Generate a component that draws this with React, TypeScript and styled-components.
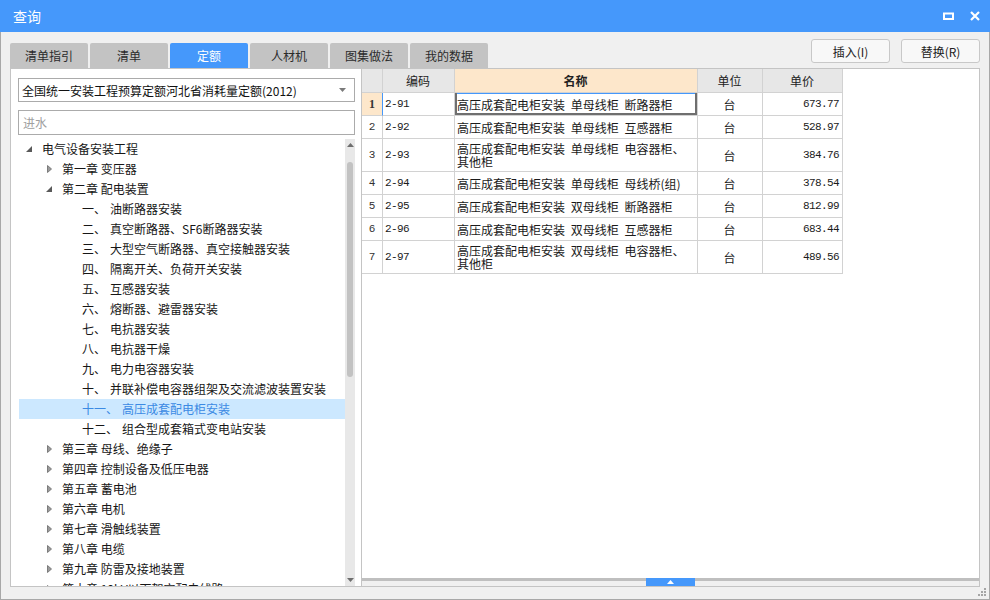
import styled, { createGlobalStyle } from "styled-components";

//types
type TreeNode = {
  level: number;
  label: string;
  num?: string;
  state?: "open" | "closed";
  selected?: boolean;
};
type Quota = {
  no: number;
  code: string;
  name: string;
  unit: string;
  price: string;
};

//data
const tabs = ["清单指引", "清单", "定额", "人材机", "图集做法", "我的数据"];

const tree: TreeNode[] = [
  { level: 0, label: "电气设备安装工程", state: "open" },
  { level: 1, label: "第一章 变压器", state: "closed" },
  { level: 1, label: "第二章 配电装置", state: "open" },
  { level: 2, num: "一、", label: "油断路器安装" },
  { level: 2, num: "二、", label: "真空断路器、SF6断路器安装" },
  { level: 2, num: "三、", label: "大型空气断路器、真空接触器安装" },
  { level: 2, num: "四、", label: "隔离开关、负荷开关安装" },
  { level: 2, num: "五、", label: "互感器安装" },
  { level: 2, num: "六、", label: "熔断器、避雷器安装" },
  { level: 2, num: "七、", label: "电抗器安装" },
  { level: 2, num: "八、", label: "电抗器干燥" },
  { level: 2, num: "九、", label: "电力电容器安装" },
  { level: 2, num: "十、", label: "并联补偿电容器组架及交流滤波装置安装" },
  { level: 2, num: "十一、", label: "高压成套配电柜安装", selected: true },
  { level: 2, num: "十二、", label: "组合型成套箱式变电站安装" },
  { level: 1, label: "第三章 母线、绝缘子", state: "closed" },
  { level: 1, label: "第四章 控制设备及低压电器", state: "closed" },
  { level: 1, label: "第五章 蓄电池", state: "closed" },
  { level: 1, label: "第六章 电机", state: "closed" },
  { level: 1, label: "第七章 滑触线装置", state: "closed" },
  { level: 1, label: "第八章 电缆", state: "closed" },
  { level: 1, label: "第九章 防雷及接地装置", state: "closed" },
  { level: 1, label: "第十章 10kV以下架空配电线路", state: "closed" },
];

const quotas: Quota[] = [
  { no: 1, code: "2-91", name: "高压成套配电柜安装 单母线柜 断路器柜", unit: "台", price: "673.77" },
  { no: 2, code: "2-92", name: "高压成套配电柜安装 单母线柜 互感器柜", unit: "台", price: "528.97" },
  { no: 3, code: "2-93", name: "高压成套配电柜安装 单母线柜 电容器柜、\n其他柜", unit: "台", price: "384.76" },
  { no: 4, code: "2-94", name: "高压成套配电柜安装 单母线柜 母线桥(组)", unit: "台", price: "378.54" },
  { no: 5, code: "2-95", name: "高压成套配电柜安装 双母线柜 断路器柜", unit: "台", price: "812.99" },
  { no: 6, code: "2-96", name: "高压成套配电柜安装 双母线柜 互感器柜", unit: "台", price: "683.44" },
  { no: 7, code: "2-97", name: "高压成套配电柜安装 双母线柜 电容器柜、\n其他柜", unit: "台", price: "489.56" },
];

const BLUE = "#4598fb";
const GRID = "#d2d2d2";
const COLS = "21px 72px 243px 65px 80px";

//styles
const GlobalStyle = createGlobalStyle`
  html, body { margin: 0; padding: 0; background: #f0f0f0; }
  body {
    font-family: "Noto Sans CJK SC", "Noto Sans", sans-serif;
    font-size: 12px;
    color: #1e1e1e;
  }
  * { box-sizing: border-box; }
`;

const Window = styled.div`
  width: 990px;
  height: 600px;
  display: flex;
  flex-direction: column;
  background: #f0f0f0;
  border: 1px solid #a8a8a8;
  border-top: none;
`;
const TitleBar = styled.div`
  height: 32px;
  margin: 0 -1px;
  padding: 0 10px 0 13px;
  display: flex;
  align-items: center;
  justify-content: space-between;
  background: ${BLUE};
  color: #fff;
  font-size: 14px;
`;
const Controls = styled.div`
  display: flex;
  align-items: center;
  gap: 16px;
  margin-top: -1px;
`;
const Toolbar = styled.div`
  height: 36px;
  padding: 0 9px;
  display: flex;
  align-items: flex-end;
  justify-content: space-between;
`;
const Tabs = styled.div`
  display: flex;
  gap: 2px;
`;
const Tab = styled.div<{ $active?: boolean }>`
  width: 78px;
  height: 25px;
  display: flex;
  align-items: center;
  justify-content: center;
  border-radius: 2px 2px 0 0;
  background: ${(p) => (p.$active ? BLUE : "#c3c3c3")};
  color: ${(p) => (p.$active ? "#fff" : "#2b2b2b")};
  font-size: 12px;
`;
const Buttons = styled.div`
  display: flex;
  gap: 11px;
  margin-bottom: 5px;
`;
const Button = styled.button`
  width: 79px;
  height: 24px;
  padding: 0;
  border: 1px solid #c8c8c8;
  border-radius: 3px;
  background: #f8f8f8;
  color: #222;
  font-family: inherit;
  font-size: 12px;
`;
const Main = styled.div`
  flex: 1;
  margin: 0 9px;
  display: flex;
  border: 1px solid #c4c4c4;
  min-height: 0;
`;
const LeftPanel = styled.div`
  width: 350px;
  padding: 9px 6px 0 7px;
  display: flex;
  flex-direction: column;
  background: #fff;
`;
const Select = styled.div`
  height: 24px;
  padding: 0 8px 0 3px;
  display: flex;
  align-items: center;
  justify-content: space-between;
  border: 1px solid #ababab;
  font-size: 12px;
  color: #111;
`;
const Search = styled.div`
  height: 25px;
  margin-top: 8px;
  padding: 0 4px;
  display: flex;
  align-items: center;
  border: 1px solid #ababab;
  color: #a0a0a0;
  font-size: 12px;
`;
const TreeArea = styled.div`
  flex: 1;
  margin: 4px 0 0 1px;
  display: flex;
  min-height: 0;
`;
const TreeList = styled.div`
  flex: 1;
  overflow: hidden;
`;
const TreeRow = styled.div<{ $level: number; $selected?: boolean }>`
  height: 20px;
  padding-left: ${(p) => 6 + p.$level * 20}px;
  display: flex;
  align-items: center;
  white-space: nowrap;
  line-height: 20px;
  font-size: 12px;
  background: ${(p) => (p.$selected ? "#cce8ff" : "transparent")};
  color: ${(p) => (p.$selected ? "#3b8ae4" : "#161616")};
`;
const Toggle = styled.span`
  width: 17px;
  height: 20px;
  flex: none;
  display: flex;
  align-items: center;
`;
const Num = styled.span`
  margin-right: 4px;
`;
const VScroll = styled.div`
  width: 10px;
  display: flex;
  flex-direction: column;
  align-items: center;
  background: #e8e8e8;
`;
const ScrollArrow = styled.div`
  height: 12px;
  display: flex;
  align-items: center;
  justify-content: center;
`;
const Thumb = styled.div`
  width: 6px;
  height: 215px;
  margin-top: 11px;
  border-radius: 3px;
  background: #c2c2c2;
`;
const Spacer = styled.div`
  flex: 1;
`;
const RightPanel = styled.div`
  flex: 1;
  display: flex;
  flex-direction: column;
  border-left: 1px solid #c4c4c4;
`;
const TableArea = styled.div`
  flex: 1;
  background: #fff;
`;
const Row = styled.div<{ $h: number }>`
  display: grid;
  grid-template-columns: ${COLS};
  width: 481px;
  height: ${(p) => p.$h}px;
`;
const Cell = styled.div<{
  $align?: "left" | "center" | "right";
  $bg?: string;
  $bold?: boolean;
  $mono?: boolean;
}>`
  display: flex;
  align-items: center;
  justify-content: ${(p) =>
    p.$align === "right" ? "flex-end" : p.$align === "center" ? "center" : "flex-start"};
  padding: 0 3px 0 2px;
  border-right: 1px solid ${GRID};
  border-bottom: 1px solid ${GRID};
  background: ${(p) => p.$bg || "#fff"};
  font-weight: ${(p) => (p.$bold ? 700 : 400)};
  font-family: ${(p) =>
    p.$mono ? `"Liberation Mono", monospace` : `"Noto Sans CJK SC", sans-serif`};
  font-size: ${(p) => (p.$mono ? "11px" : "12px")};
  letter-spacing: ${(p) => (p.$mono ? "-0.6px" : "0")};
  color: #1a1a1a;
  overflow: hidden;
`;
const HeadCell = styled(Cell)`
  background: ${(p) => p.$bg || "#e7e7e7"};
  color: #222;
`;
const RowNo = styled(Cell)<{ $current?: boolean }>`
  justify-content: center;
  padding: 0;
  color: #333;
  background: ${(p) => (p.$current ? "#fde7cb" : "#fff")};
  border-right-color: ${(p) => (p.$current ? BLUE : GRID)};
  font-family: ${(p) =>
    p.$current ? `"Liberation Serif", serif` : `"Liberation Mono", monospace`};
  font-size: ${(p) => (p.$current ? "12px" : "11px")};
`;
const NameCell = styled(Cell)<{ $focus?: boolean }>`
  white-space: pre-wrap;
  word-spacing: 3px;
  line-height: 13px;
  box-shadow: ${(p) =>
    p.$focus
      ? `inset 2px 0 0 #6f6f6f, inset -2px 0 0 #6f6f6f, inset 0 -2px 0 #6f6f6f, inset 0 1px 0 ${BLUE}`
      : "none"};
`;
const HScroll = styled.div`
  height: 8px;
  padding-left: 284px;
  display: flex;
  background: linear-gradient(#bfbfbf 0 3px, #f0f0f0 3px);
`;
const HThumb = styled.div`
  width: 49px;
  display: flex;
  align-items: center;
  justify-content: center;
  background: ${BLUE};
`;
const Footer = styled.div`
  height: 12px;
  padding: 1px 2px 0 0;
  display: flex;
  justify-content: flex-end;
`;

//icons
function Maximize() {
  return (
    <svg width="11" height="8" viewBox="0 0 11 8">
      <rect x="1" y="1.5" width="9" height="5.5" fill="none" stroke="#fff" strokeWidth="2" />
    </svg>
  );
}
function Close() {
  return (
    <svg width="10" height="10" viewBox="0 0 10 10">
      <path d="M1 1 L9 9 M9 1 L1 9" stroke="#fff" strokeWidth="2.2" />
    </svg>
  );
}
function Caret({ dir, color = "#6e6e6e" }: { dir: "up" | "down"; color?: string }) {
  return (
    <svg width="7" height="4" viewBox="0 0 7 4">
      <polygon points={dir === "up" ? "3.5,0 7,4 0,4" : "0,0 7,0 3.5,4"} fill={color} />
    </svg>
  );
}
function TreeToggle({ state }: { state?: "open" | "closed" }) {
  if (state === "open")
    return (
      <svg width="6" height="6" viewBox="0 0 6 6" style={{ marginLeft: 1 }}>
        <polygon points="6,0 6,6 0,6" fill="#595959" />
      </svg>
    );
  if (state === "closed")
    return (
      <svg width="5" height="8" viewBox="0 0 5 8" style={{ marginLeft: 2 }}>
        <polygon points="0.5,0.5 4.5,4 0.5,7.5" fill="#9a9a9a" stroke="#7c7c7c" strokeWidth="1" />
      </svg>
    );
  return null;
}
function Grip() {
  return (
    <svg width="9" height="9" viewBox="0 0 9 9">
      {[
        [6, 0],
        [3, 3],
        [6, 3],
        [0, 6],
        [3, 6],
        [6, 6],
      ].map(([x, y]) => (
        <rect key={`${x}-${y}`} x={x} y={y} width="2" height="2" fill="#a5a5a5" />
      ))}
    </svg>
  );
}

export default function App() {
  return (
    <>
      <GlobalStyle />
      <Window>
        <TitleBar>
          <span>查询</span>
          <Controls>
            <Maximize />
            <Close />
          </Controls>
        </TitleBar>

        <Toolbar>
          <Tabs>
            {tabs.map((t) => (
              <Tab key={t} $active={t === "定额"}>
                {t}
              </Tab>
            ))}
          </Tabs>
          <Buttons>
            <Button>插入(I)</Button>
            <Button>替换(R)</Button>
          </Buttons>
        </Toolbar>

        <Main>
          <LeftPanel>
            <Select>
              <span>全国统一安装工程预算定额河北省消耗量定额(2012)</span>
              <Caret dir="down" color="#7a7a7a" />
            </Select>
            <Search>进水</Search>
            <TreeArea>
              <TreeList>
                {tree.map((n, i) => (
                  <TreeRow key={i} $level={n.level} $selected={n.selected}>
                    <Toggle>
                      <TreeToggle state={n.state} />
                    </Toggle>
                    {n.num && <Num>{n.num}</Num>}
                    <span>{n.label}</span>
                  </TreeRow>
                ))}
              </TreeList>
              <VScroll>
                <ScrollArrow>
                  <Caret dir="up" />
                </ScrollArrow>
                <Thumb />
                <Spacer />
                <ScrollArrow>
                  <Caret dir="down" />
                </ScrollArrow>
              </VScroll>
            </TreeArea>
          </LeftPanel>

          <RightPanel>
            <TableArea>
              <Row $h={24}>
                <HeadCell />
                <HeadCell $align="center">编码</HeadCell>
                <HeadCell $align="center" $bg="#fde7cb" $bold>
                  名称
                </HeadCell>
                <HeadCell $align="center">单位</HeadCell>
                <HeadCell $align="center">单价</HeadCell>
              </Row>
              {quotas.map((q) => {
                const current = q.no === 1;
                return (
                  <Row key={q.no} $h={q.name.includes("\n") ? 33 : 23}>
                    <RowNo $current={current} $bold={current}>
                      {q.no}
                    </RowNo>
                    <Cell $mono>{q.code}</Cell>
                    <NameCell $focus={current}>{q.name}</NameCell>
                    <Cell $align="center">{q.unit}</Cell>
                    <Cell $align="right" $mono>
                      {q.price}
                    </Cell>
                  </Row>
                );
              })}
            </TableArea>
            <HScroll>
              <HThumb>
                <Caret dir="up" color="#fff" />
              </HThumb>
            </HScroll>
          </RightPanel>
        </Main>

        <Footer>
          <Grip />
        </Footer>
      </Window>
    </>
  );
}
